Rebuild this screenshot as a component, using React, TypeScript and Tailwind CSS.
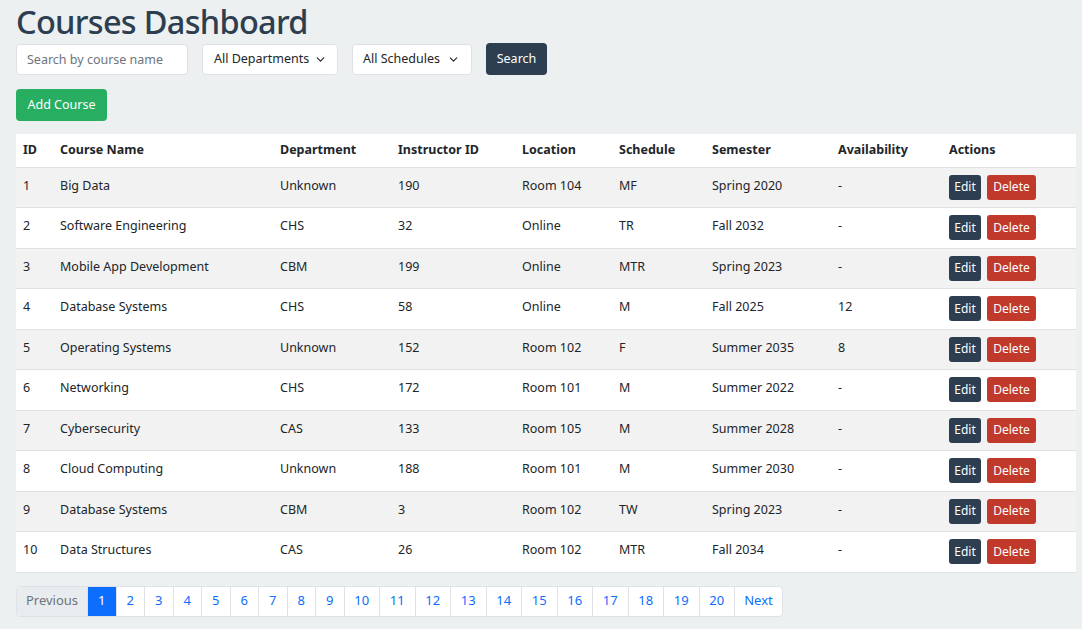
import { ChevronDown } from "lucide-react";

type Course = {
  id: number;
  name: string;
  department: string;
  instructorId: number;
  location: string;
  schedule: string;
  semester: string;
  availability: string;
};

const COURSES: Course[] = [
  { id: 1, name: "Big Data", department: "Unknown", instructorId: 190, location: "Room 104", schedule: "MF", semester: "Spring 2020", availability: "-" },
  { id: 2, name: "Software Engineering", department: "CHS", instructorId: 32, location: "Online", schedule: "TR", semester: "Fall 2032", availability: "-" },
  { id: 3, name: "Mobile App Development", department: "CBM", instructorId: 199, location: "Online", schedule: "MTR", semester: "Spring 2023", availability: "-" },
  { id: 4, name: "Database Systems", department: "CHS", instructorId: 58, location: "Online", schedule: "M", semester: "Fall 2025", availability: "12" },
  { id: 5, name: "Operating Systems", department: "Unknown", instructorId: 152, location: "Room 102", schedule: "F", semester: "Summer 2035", availability: "8" },
  { id: 6, name: "Networking", department: "CHS", instructorId: 172, location: "Room 101", schedule: "M", semester: "Summer 2022", availability: "-" },
  { id: 7, name: "Cybersecurity", department: "CAS", instructorId: 133, location: "Room 105", schedule: "M", semester: "Summer 2028", availability: "-" },
  { id: 8, name: "Cloud Computing", department: "Unknown", instructorId: 188, location: "Room 101", schedule: "M", semester: "Summer 2030", availability: "-" },
  { id: 9, name: "Database Systems", department: "CBM", instructorId: 3, location: "Room 102", schedule: "TW", semester: "Spring 2023", availability: "-" },
  { id: 10, name: "Data Structures", department: "CAS", instructorId: 26, location: "Room 102", schedule: "MTR", semester: "Fall 2034", availability: "-" },
];

const HEADERS = ["ID", "Course Name", "Department", "Instructor ID", "Location", "Schedule", "Semester", "Availability", "Actions"];
const WIDTHS = ["w-[37px]", "w-[220px]", "w-[118px]", "w-[124px]", "w-[97px]", "w-[93px]", "w-[126px]", "w-[111px]", "w-[134px]"];

const PAGES = Array.from({ length: 20 }, (_, i) => i + 1);

export default function App() {
  return (
    <div className="min-h-screen bg-[#ecf0f1] pl-4 pr-[6px] text-[#212529] font-['Noto_Sans',sans-serif]">
      <h1 className="text-[32.5px] font-medium leading-[43px] text-[#2c3e50] tracking-[-0.7px]">Courses Dashboard</h1>

      <div className="flex items-center gap-[14px]">
        <input
          placeholder="Search by course name"
          className="h-[31px] w-[172px] rounded-[4px] border border-[#dee2e6] bg-white px-[10px] text-[12.5px] placeholder:text-[#6c757d] outline-none"
        />
        <div className="flex h-[31px] w-[136px] items-center justify-between rounded-[4px] border border-[#dee2e6] bg-white pl-[11px] pr-[10px] text-[12.5px]">
          <span>All Departments</span>
          <ChevronDown size={13} strokeWidth={2} />
        </div>
        <div className="flex h-[31px] w-[120px] items-center justify-between rounded-[4px] border border-[#dee2e6] bg-white pl-[10px] pr-[11px] text-[12.5px]">
          <span>All Schedules</span>
          <ChevronDown size={13} strokeWidth={2} />
        </div>
        <button className="h-[32px] w-[61px] rounded-[4px] bg-[#2c3e50] text-[12.5px] text-white">Search</button>
      </div>

      <button className="mt-[14px] h-[32px] w-[91px] rounded-[4px] bg-[#27ae60] text-[12.5px] text-white">Add Course</button>

      <table className="mt-[13px] w-[1060px] table-fixed border-collapse bg-white text-[12.5px]">
        <thead>
          <tr className="h-[33px] border-b border-[#dee2e6]">
            {HEADERS.map((h, i) => (
              <th key={h} className={`${WIDTHS[i]} px-[7px] text-left text-[12.5px] font-bold`}>
                {h}
              </th>
            ))}
          </tr>
        </thead>
        <tbody>
          {COURSES.map((c, i) => (
            <tr key={c.id} className={`h-[40.5px] border-b border-[#dee2e6] ${i % 2 === 0 ? "bg-[#f2f2f2]" : "bg-white"}`}>
              <td className="px-[7px] pt-[8px] align-top leading-[20px]">{c.id}</td>
              <td className="px-[7px] pt-[8px] align-top leading-[20px]">{c.name}</td>
              <td className="px-[7px] pt-[8px] align-top leading-[20px]">{c.department}</td>
              <td className="px-[7px] pt-[8px] align-top leading-[20px]">{c.instructorId}</td>
              <td className="px-[7px] pt-[8px] align-top leading-[20px]">{c.location}</td>
              <td className="px-[7px] pt-[8px] align-top leading-[20px]">{c.schedule}</td>
              <td className="px-[7px] pt-[8px] align-top leading-[20px]">{c.semester}</td>
              <td className="px-[7px] pt-[8px] align-top leading-[20px]">{c.availability}</td>
              <td className="px-[7px] pt-[7px] align-top">
                <div className="flex gap-[6px]">
                  <button className="h-[25px] w-[32px] rounded-[3px] bg-[#2c3e50] text-[12px] text-white">Edit</button>
                  <button className="h-[25px] w-[49px] rounded-[3px] bg-[#c0392b] text-[12px] text-white">Delete</button>
                </div>
              </td>
            </tr>
          ))}
        </tbody>
      </table>

      <nav className="mt-[13px] flex h-[31px] w-fit overflow-hidden rounded-[4px] border border-[#dee2e6] bg-white text-[13px]">
        <span className="flex w-[70px] items-center justify-center bg-[#e9ecef] text-[#6c757d]">Previous</span>
        {PAGES.map((p) => (
          <span
            key={p}
            className={`flex items-center justify-center border-l border-[#dee2e6] ${p < 10 ? "w-[28.5px]" : "w-[35.5px]"} ${
              p === 1 ? "border-[#0d6efd] bg-[#0d6efd] text-white" : "text-[#0d6efd]"
            }`}
          >
            {p}
          </span>
        ))}
        <span className="flex w-[48px] items-center justify-center border-l border-[#dee2e6] text-[#0d6efd]">Next</span>
      </nav>
    </div>
  );
}
